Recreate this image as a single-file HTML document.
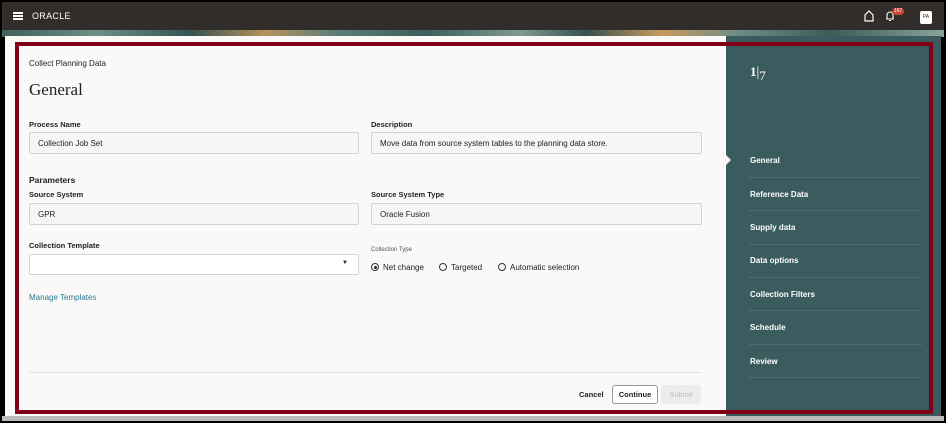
<!DOCTYPE html><html><head><style>
*{margin:0;padding:0;box-sizing:border-box}
body{width:946px;height:423px;background:#000;font-family:"Liberation Sans",sans-serif;position:relative;overflow:hidden}
.abs{position:absolute}
.lbl{position:absolute;font-size:7.5px;color:#222;font-weight:bold}
.inp{position:absolute;height:22px;border:1px solid #d6d3cf;background:#f7f6f4;border-radius:2px;font-size:8px;color:#222;padding:6px 8px}
.nav{position:absolute;left:750px;font-size:8px;color:#fff;font-weight:bold}
.sep{position:absolute;left:749px;width:173px;height:1px;background:#4c6e70}
.rad{display:inline-block;width:8px;height:8px;border:1px solid #333;border-radius:50%;vertical-align:-1px;margin-right:4px;position:relative}
</style></head><body>
<div class="abs" style="left:2px;top:2px;width:942px;height:28px;background:#312d2a"></div>
<div class="abs" style="left:13px;top:12px;width:10px;height:1.5px;background:#fff;box-shadow:0 3px 0 #fff,0 6px 0 #fff"></div>
<div class="abs" style="left:32px;top:11px;color:#fff;font-size:9px;letter-spacing:.3px">ORACLE</div>
<svg class="abs" style="left:863px;top:10px" width="12" height="12" viewBox="0 0 12 12"><path d="M2 11V5L6 1L10 5V11Z" fill="none" stroke="#fff" stroke-width="1.2"/></svg>
<svg class="abs" style="left:884px;top:10px" width="12" height="12" viewBox="0 0 12 12"><path d="M3 9V5a3 3 0 0 1 6 0v4H2h8M5 10.5h2" fill="none" stroke="#fff" stroke-width="1.1"/></svg>
<div class="abs" style="left:892px;top:8px;width:12px;height:7px;border-radius:4px;background:#c74634;color:#fff;font-size:5px;text-align:center;line-height:7px">167</div>
<div class="abs" style="left:920px;top:11px;width:12px;height:13px;background:#fff;border-radius:2px;font-size:5px;text-align:center;line-height:13px;color:#333">PA</div>
<div class="abs" style="left:2px;top:30px;width:942px;height:7px;background:linear-gradient(90deg,#3f5f5b,#6f8e88 10%,#34524f 20%,#b8915c 28%,#5f7f7a 35%,#3d5e5a 45%,#7f9a94 55%,#34524f 62%,#c89a5e 70%,#6f8d88 78%,#3d5c58 88%,#8aa29c)"></div>
<div class="abs" style="left:5px;top:36px;width:721px;height:380px;background:#fbf9f8"></div>
<div class="abs" style="left:726px;top:36px;width:215px;height:380px;background:#3a5c5e"></div>
<div class="abs" style="left:2px;top:416px;width:942px;height:5px;background:#bbb"></div>
<div class="abs" style="left:15px;top:42px;width:918px;height:372px;border:4px solid #800018"></div>
<div class="abs" style="left:29px;top:59px;font-size:8px;color:#222">Collect Planning Data</div>
<div class="abs" style="left:29px;top:80px;font-size:17px;color:#222;font-family:'Liberation Serif',serif">General</div>
<div class="lbl" style="left:29px;top:120px">Process Name</div>
<div class="inp" style="left:29px;top:132px;width:330px">Collection Job Set</div>
<div class="lbl" style="left:371px;top:120px">Description</div>
<div class="inp" style="left:371px;top:132px;width:331px">Move data from source system tables to the planning data store.</div>
<div class="abs" style="left:29px;top:175px;font-size:8.5px;font-weight:bold;color:#222">Parameters</div>
<div class="lbl" style="left:29px;top:190px">Source System</div>
<div class="inp" style="left:29px;top:203px;width:330px">GPR</div>
<div class="lbl" style="left:371px;top:190px">Source System Type</div>
<div class="inp" style="left:371px;top:203px;width:331px">Oracle Fusion</div>
<div class="lbl" style="left:29px;top:241px">Collection Template</div>
<div class="inp" style="left:29px;top:254px;width:330px;background:#fff;height:21px"><span style="position:absolute;right:10px;top:5px;font-size:6px">▼</span></div>
<div class="abs" style="left:371px;top:247px;font-size:6px;color:#555">Collection Type</div>
<div class="abs" style="left:371px;top:263px;font-size:8px;color:#222"><span class="rad"><span style="position:absolute;left:1.5px;top:1.5px;width:3px;height:3px;background:#222;border-radius:50%"></span></span>Net change</div>
<div class="abs" style="left:439px;top:263px;font-size:8px;color:#222"><span class="rad"></span>Targeted</div>
<div class="abs" style="left:498px;top:263px;font-size:8px;color:#222"><span class="rad"></span>Automatic selection</div>
<div class="abs" style="left:29px;top:293px;font-size:8px;color:#2a7a92">Manage Templates</div>
<div class="abs" style="left:29px;top:372px;width:672px;height:1px;background:#e6e3e0"></div>
<div class="abs" style="left:579px;top:390px;font-size:7.5px;color:#222;font-weight:bold">Cancel</div>
<div class="abs" style="left:612px;top:385px;width:46px;height:19px;border:1px solid #999;border-radius:3px;background:#fff;font-size:7.5px;font-weight:bold;text-align:center;line-height:17px;color:#222">Continue</div>
<div class="abs" style="left:661px;top:385px;width:40px;height:19px;border-radius:3px;background:#eeecea;font-size:7.5px;text-align:center;line-height:19px;color:#bbb">Submit</div>
<div class="abs" style="left:750px;top:64px;color:#fff;font-family:'Liberation Serif',serif;font-size:13px;font-weight:bold">1<span style="font-weight:normal;font-size:14px">|</span><span style="font-weight:normal;position:relative;top:4px">7</span></div>
<div class="abs" style="left:726px;top:155px;width:0;height:0;border-top:5px solid transparent;border-bottom:5px solid transparent;border-left:5px solid #fbf9f8"></div>
<div class="nav" style="top:156px">General</div><div class="sep" style="top:177px"></div>
<div class="nav" style="top:190px">Reference Data</div><div class="sep" style="top:210px"></div>
<div class="nav" style="top:223px">Supply data</div><div class="sep" style="top:244px"></div>
<div class="nav" style="top:256px">Data options</div><div class="sep" style="top:277px"></div>
<div class="nav" style="top:290px">Collection Filters</div><div class="sep" style="top:310px"></div>
<div class="nav" style="top:323px">Schedule</div><div class="sep" style="top:344px"></div>
<div class="nav" style="top:357px">Review</div><div class="sep" style="top:377px"></div>
</body></html>
